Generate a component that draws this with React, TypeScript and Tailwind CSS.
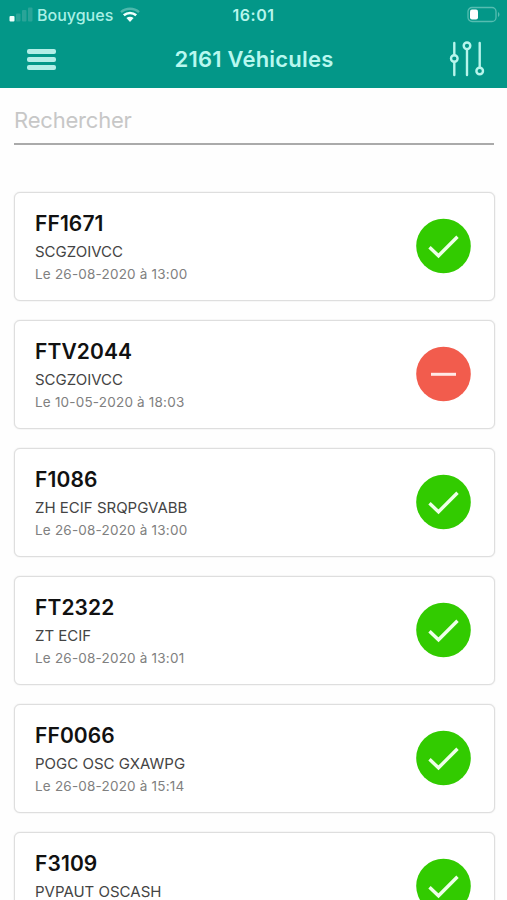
type Vehicle = {
  id: string;
  place: string;
  date?: string;
  isValid: boolean;
};

const vehicles: Vehicle[] = [
  { id: "FF1671", place: "SCGZOIVCC", date: "Le 26-08-2020 à 13:00", isValid: true },
  { id: "FTV2044", place: "SCGZOIVCC", date: "Le 10-05-2020 à 18:03", isValid: false },
  { id: "F1086", place: "ZH ECIF SRQPGVABB", date: "Le 26-08-2020 à 13:00", isValid: true },
  { id: "FT2322", place: "ZT ECIF", date: "Le 26-08-2020 à 13:01", isValid: true },
  { id: "FF0066", place: "POGC OSC GXAWPG", date: "Le 26-08-2020 à 15:14", isValid: true },
  { id: "F3109", place: "PVPAUT OSCASH", isValid: true },
];

const SignalIcon = () => (
  <svg className="mr-[4px]" width="24" height="16" viewBox="0 0 24 16">
    <rect x="0.5" y="9" width="5" height="5.5" rx="1" fill="#effffc" />
    <rect x="7" y="6.5" width="4.5" height="8" rx="1" fill="#2aa498" />
    <rect x="13" y="3" width="4.5" height="11.5" rx="1" fill="#2aa498" />
    <rect x="19" y="0.5" width="4.5" height="14" rx="1" fill="#2aa498" />
  </svg>
);

const WifiIcon = () => (
  <svg width="20" height="16" viewBox="0 0 20 16" fill="none">
    <path d="M1 5.2C6 0.6 14 0.6 19 5.2" stroke="#4db8ac" strokeWidth="2.4" />
    <path d="M3.8 8.2C7.4 5.2 12.6 5.2 16.2 8.2" stroke="#effffc" strokeWidth="2.6" />
    <path d="M6.4 11C8.6 9.2 11.4 9.2 13.6 11L10 15Z" fill="#effffc" />
  </svg>
);

const BatteryIcon = () => (
  <svg width="34" height="18" viewBox="0 0 34 18" fill="none">
    <rect x="1" y="1.5" width="28" height="14" rx="4" stroke="#56bdb1" strokeWidth="1.3" />
    <rect x="3" y="3.5" width="8" height="10" rx="2" fill="#fff" />
    <path d="M31 6V11C33 10 33 7 31 6Z" fill="#56bdb1" />
  </svg>
);

const FilterIcon = () => (
  <svg width="36" height="36" viewBox="0 0 36 36" fill="none" stroke="#b8f5ec" strokeWidth="2.4" strokeLinecap="round">
    <path d="M5.3 2V14M5.3 21V34" />
    <circle cx="5.3" cy="17.5" r="3.3" />
    <path d="M18 8.4V34" />
    <circle cx="18" cy="4.8" r="3.3" />
    <path d="M30.7 2V26.5" />
    <circle cx="30.7" cy="30" r="3.3" />
  </svg>
);

const StatusIcon = ({ isValid }: { isValid: boolean }) => (
  <svg width="56" height="56" viewBox="0 0 56 56" fill="none">
    <circle cx="27.5" cy="28" r="27.3" fill={isValid ? "#32cb00" : "#f25c4d"} />
    {isValid ? (
      <path d="M13.5 29.3L22.5 37.8L41.5 18.7" stroke="#efffe9" strokeWidth="3.4" />
    ) : (
      <path d="M15 28.3H40" stroke="#ffeae7" strokeWidth="3" />
    )}
  </svg>
);

const VehicleCard = ({ id, place, date, isValid }: Vehicle) => (
  <li className="flex h-[109px] shrink-0 items-start justify-between rounded-md border border-[#dedede] bg-white pt-[18px] pr-[22px] pl-[20px] shadow-[0_0_1.5px_#dcdcdc]">
    <div className="flex flex-col">
      <div className="text-[21px] leading-[26px] font-semibold tracking-[0.1px] text-[#111]">{id}</div>
      <div className="mt-[3px] text-[15px] leading-[24px] text-[#444]">{place}</div>
      {date && <div className="-mt-px text-[13.5px] leading-[22px] tracking-[0.2px] text-[#808080]">{date}</div>}
    </div>
    <div className="mt-[7px]">
      <StatusIcon isValid={isValid} />
    </div>
  </li>
);

const App = () => {
  return (
    <div className="flex h-[900px] w-[507px] flex-col overflow-hidden bg-[#fefefe] font-['Inter',sans-serif]">
      <header className="h-[88px] shrink-0 bg-[#039788]">
        <div className="grid h-[30px] grid-cols-3 items-center pr-[6px] pl-[9px]">
          <div className="flex items-center">
            <SignalIcon />
            <span className="mr-[7px] text-[16px] font-medium text-[#a9f0e5]">Bouygues</span>
            <WifiIcon />
          </div>
          <div className="-ml-[3px] text-center text-[16px] font-semibold tracking-[0.5px] text-[#b8f5ec]">16:01</div>
          <div className="flex justify-end">
            <BatteryIcon />
          </div>
        </div>
        <div className="flex h-[58px] items-center justify-between pr-[22px] pl-[27px]">
          <button type="button" aria-label="Menu" className="flex w-[29px] flex-col gap-[3px]">
            <span className="h-[5px] rounded-[2px] bg-[#b3eee7]" />
            <span className="h-[5px] rounded-[2px] bg-[#b3eee7]" />
            <span className="h-[5px] rounded-[2px] bg-[#b3eee7]" />
          </button>
          <h1 className="pb-px pl-[3px] text-[22px] leading-[30px] font-semibold tracking-[0.2px] text-[#b8f8ef]">
            2161 Véhicules
          </h1>
          <button type="button" aria-label="Filtres">
            <FilterIcon />
          </button>
        </div>
      </header>
      <div className="mr-[13px] ml-[14px] shrink-0 border-b-2 border-[#aaa]">
        <input
          className="block h-[55px] w-full pt-[8px] text-[22px] tracking-[-0.2px] text-[#333] outline-none placeholder:text-[#c7c7c7]"
          placeholder="Rechercher"
        />
      </div>
      <ul className="mt-[47px] flex flex-col gap-[19px] pr-[12px] pl-[14px]">
        {vehicles.map((vehicle) => (
          <VehicleCard key={vehicle.id} {...vehicle} />
        ))}
      </ul>
    </div>
  );
};

export default App;
